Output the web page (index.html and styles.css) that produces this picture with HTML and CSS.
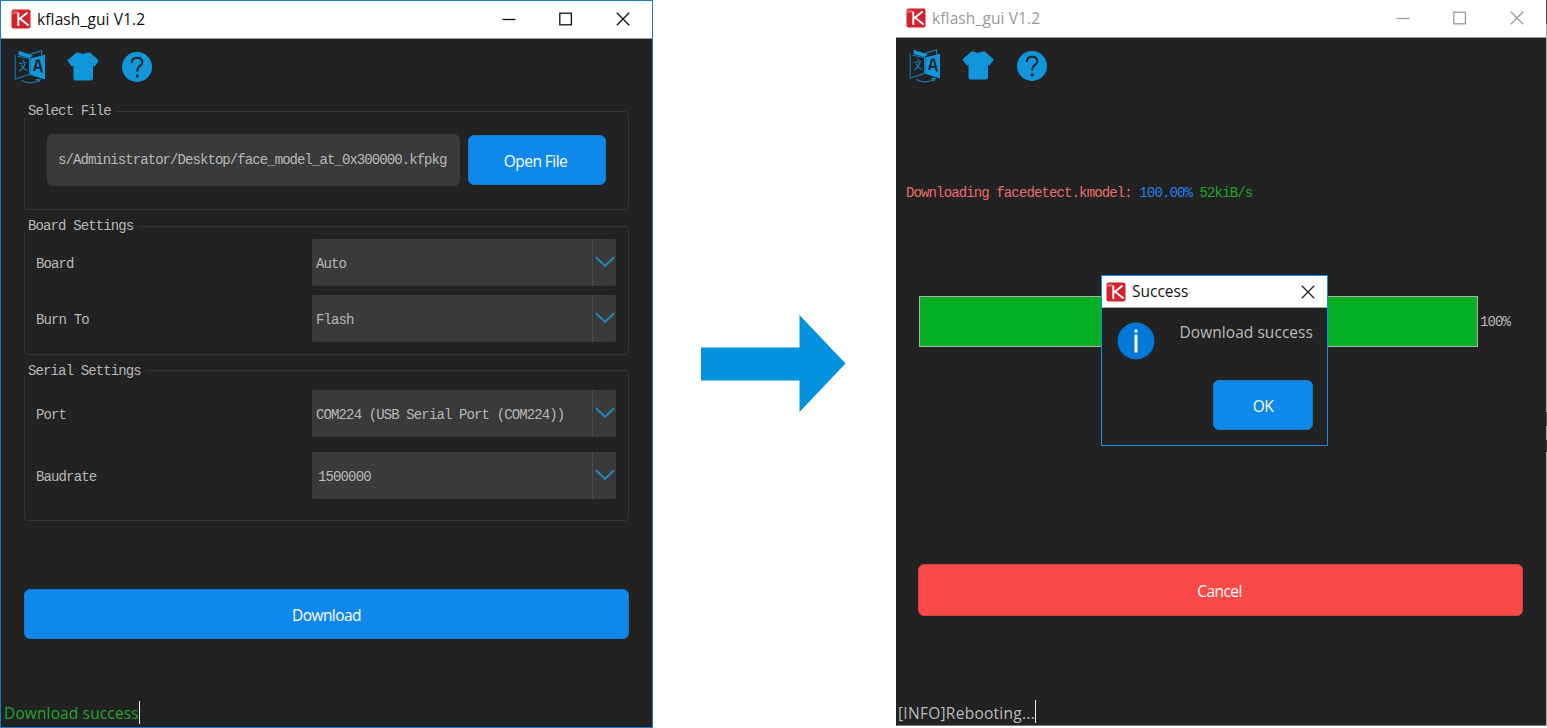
FILE: index.html
```html
<!DOCTYPE html>
<html lang="en">
<head>
<meta charset="utf-8">
<title>kflash_gui V1.2</title>
<link rel="stylesheet" href="styles.css">
</head>
<body>
<svg class="defs" aria-hidden="true">
  <symbol id="logo" viewBox="0 0 20 20">
    <rect x=".5" y=".5" width="19" height="19" rx="2" fill="#d3222c"/>
    <path d="M7.3 3.6V17M7.5 10.8L16.6 3.4M9 9.6L17.6 16.6" fill="none" stroke="#fff" stroke-width="1.9"/>
    <circle cx="2.6" cy="3.4" r="1.2" fill="none" stroke="#f3b4b7" stroke-width=".6"/>
    <circle cx="5.2" cy="3.4" r=".9" fill="none" stroke="#f3b4b7" stroke-width=".6"/>
  </symbol>
  <symbol id="lang" viewBox="0 0 32 34">
    <path d="M4.5 5V.8L19 5.6 15.6 8z" fill="#1296db"/>
    <path d="M15 4.6L27.6.8V6M1.2 4.8V29L15.5 24.6V8.5L3.5 6.2" fill="none" stroke="#1296db" stroke-width="1.1" opacity=".8"/>
    <path d="M16.2 8.6L31 4.8V29.6L16.2 24.8z" fill="#1296db"/>
    <path d="M20 21L23 10.5H24.8L28 22.5M21 17.8H26.8" fill="none" stroke="#222" stroke-width="2"/>
    <path d="M8.8 9.5L9.8 11.8M5 13.5L12.6 12.5M11 13.5Q9.5 19 5 21M7 14.8Q9 18.5 12.8 20.5" fill="none" stroke="#1296db" stroke-width="1.2" opacity=".8"/>
    <path d="M7.5 30.5Q15.5 35 24.5 30.8M22 29.7H26L24 32.4" fill="none" stroke="#1296db" stroke-width="1.2" opacity=".8"/>
  </symbol>
  <symbol id="shirt" viewBox="0 0 32 30">
    <path d="M9.5 1H11.2Q15.8 3.8 20.5 1H23L31.2 8.5 27.5 14 25.5 13.2V26.5Q25.5 28 24 28H8.5Q7 28 7 26.5V13.2L5 14 .8 8.5z" fill="#1296db" stroke="#1296db" stroke-linejoin="round"/>
  </symbol>
  <symbol id="help" viewBox="0 0 32 32">
    <circle cx="16" cy="16" r="15" fill="#1296db"/>
    <path d="M10.7 12Q11 6.7 16 6.7 21.3 6.7 21.3 11.3 21.3 13.7 18.7 15.2 16.3 16.8 16.3 20.5" fill="none" stroke="#222" stroke-width="2"/>
    <rect x="15" y="23.5" width="2.6" height="2.8" fill="#222"/>
  </symbol>
  <symbol id="min" viewBox="0 0 14 14"><path d="M.5 7.5H13.5" stroke="currentColor" stroke-width="1.3"/></symbol>
  <symbol id="max" viewBox="0 0 14 14"><rect x=".8" y="1.2" width="11.6" height="11.6" fill="none" stroke="currentColor" stroke-width="1.3"/></symbol>
  <symbol id="close" viewBox="0 0 14 14"><path d="M.8.8L13.2 13.2M13.2.8L.8 13.2" stroke="currentColor" stroke-width="1.3"/></symbol>
  <symbol id="chev" viewBox="0 0 20 12"><path d="M1 1.2L10 9.8 19 1.2" fill="none" stroke="#1f86bd" stroke-width="2"/></symbol>
</svg>

<main class="stage">
  <section class="window window-main">
    <header class="titlebar">
      <svg class="logo"><use href="#logo"/></svg>
      <span class="title">kflash_gui V1.2</span>
      <span class="controls"><svg><use href="#min"/></svg><svg><use href="#max"/></svg><svg><use href="#close"/></svg></span>
    </header>
    <nav class="toolbar">
      <svg class="lang"><use href="#lang"/></svg><svg class="shirt"><use href="#shirt"/></svg><svg class="help"><use href="#help"/></svg>
    </nav>
    <fieldset class="group group-file">
      <legend>Select File</legend>
      <div class="file-row">
        <div class="path"><span>s/Administrator/Desktop/face_model_at_0x300000.kfpkg</span></div>
        <button class="btn open">Open File</button>
      </div>
    </fieldset>
    <fieldset class="group group-board">
      <legend>Board Settings</legend>
      <div class="rows">
        <div class="row"><label>Board</label><div class="combo"><span>Auto</span><i><svg><use href="#chev"/></svg></i></div></div>
        <div class="row"><label>Burn To</label><div class="combo"><span>Flash</span><i><svg><use href="#chev"/></svg></i></div></div>
      </div>
    </fieldset>
    <fieldset class="group group-serial">
      <legend>Serial Settings</legend>
      <div class="rows">
        <div class="row"><label>Port</label><div class="combo"><span>COM224 (USB Serial Port (COM224))</span><i><svg><use href="#chev"/></svg></i></div></div>
        <div class="row"><label>Baudrate</label><div class="combo editable"><span>1500000</span><i><svg><use href="#chev"/></svg></i></div></div>
      </div>
    </fieldset>
    <button class="btn download">Download</button>
    <footer class="status ok"><span class="status-text">Download success</span></footer>
  </section>

  <svg class="arrow" viewBox="0 0 146 98"><path d="M1 32.5H99.5V0L145.5 48.5 99.5 97V65.5H1z" fill="#0292de"/></svg>

  <section class="window window-progress">
    <header class="titlebar">
      <svg class="logo"><use href="#logo"/></svg>
      <span class="title">kflash_gui V1.2</span>
      <span class="controls"><svg><use href="#min"/></svg><svg><use href="#max"/></svg><svg><use href="#close"/></svg></span>
    </header>
    <nav class="toolbar">
      <svg class="lang"><use href="#lang"/></svg><svg class="shirt"><use href="#shirt"/></svg><svg class="help"><use href="#help"/></svg>
    </nav>
    <p class="task"><span class="name">Downloading facedetect.kmodel:</span> <span class="percent">100.00%</span> <span class="speed">52kiB/s</span></p>
    <div class="progress"><div class="bar"></div><span>100%</span></div>
    <button class="btn cancel">Cancel</button>
    <footer class="status info"><span class="status-text">[INFO]Rebooting...</span></footer>

    <div class="dialog">
      <header class="dialog-title">
        <svg class="logo"><use href="#logo"/></svg>
        <span class="dialog-name">Success</span>
        <svg class="dialog-close"><use href="#close"/></svg>
      </header>
      <div class="dialog-body">
        <svg class="info-icon" viewBox="0 0 38 38"><circle cx="19" cy="19" r="18.5" fill="#0078d7"/><path d="M19 12.5V30.5M19 7.5V10.5" stroke="#fff" stroke-width="3"/></svg>
        <span class="message">Download success</span>
      </div>
      <button class="btn ok-btn">OK</button>
    </div>
  </section>
  <div class="edge"></div>
</main>
</body>
</html>
```

FILE: styles.css
```css
* { box-sizing: border-box; }
body { margin: 0; background: #fff; font-family: "Open Sans", "Noto Sans", sans-serif; overflow: hidden; }
svg { display: block; flex: none; }
.defs { position: absolute; width: 0; height: 0; }
.stage { display: flex; width: 1547px; height: 728px; }

.window { display: flex; flex-direction: column; flex: none; background: #222; }
.window-main { width: 653px; height: 728px; border: 1px solid #1d79c4; }
.window-progress { position: relative; width: 650px; height: 726px; margin-left: 50px; border-bottom: 1px solid #777; }

.titlebar { display: flex; align-items: center; height: 38px; padding: 0 22px 2px 10px; background: #fff; border-bottom: 1px solid #999; color: #111; flex: none; }
.window-progress .titlebar { padding: 0 22px 2px 10px; color: #999; }
.logo { width: 20px; height: 20px; }
.title { margin-left: 6px; font-size: 15.5px; letter-spacing: .12px; white-space: nowrap; }
.controls { display: flex; gap: 43px; margin-left: auto; }
.controls svg { width: 14px; height: 14px; }

.toolbar { display: flex; align-items: center; height: 36px; margin: 10px 0 0 13px; flex: none; }
.lang { width: 32px; height: 34px; }
.shirt { width: 32px; height: 30px; margin-left: 21px; }
.help { width: 32px; height: 32px; margin-left: 22px; }

.group { width: 605px; margin: 0 0 0 23px; padding: 0; border: 1px solid #373737; border-radius: 4px; flex: none; min-width: 0; }
.group legend { margin-left: -1px; padding: 0 5px 0 4px; height: 14px; line-height: 15px; }
.group, .task, .progress { font-family: "Liberation Mono", monospace; font-size: 14px; letter-spacing: -.875px; color: #b8b8b8; }
.group-file { height: 106px; margin-top: 19px; }
.group-board { height: 136px; margin-top: 9px; }
.group-serial { height: 158px; margin-top: 8px; }
.group-serial legend { line-height: 16px; }
.file-row { display: flex; align-items: center; gap: 8px; padding: 16px 0 0 22px; }
.path { display: flex; align-items: center; width: 413px; height: 52px; padding: 0 14px 0 11px; background: #3a3a3a; border-radius: 6px; }
.path span { height: 20px; line-height: 21px; letter-spacing: -.93px; white-space: nowrap; }
.rows { display: flex; flex-direction: column; gap: 9px; padding: 6px 12px 0 11px; }
.group-serial .rows { gap: 15px; padding-top: 13px; }
.row { display: flex; align-items: center; justify-content: space-between; }
.combo { display: flex; align-items: center; width: 304px; height: 47px; padding-left: 4px; background: #3a3a3a; border-radius: 2px; }
.combo.editable { padding-left: 6px; }
.combo span { padding-top: 2px; white-space: nowrap; }
.row label { padding-top: 2px; }
.combo i { display: flex; align-items: center; justify-content: center; width: 24px; height: 100%; margin-left: auto; border-left: 1px solid #4d4d4d; }
.combo svg { width: 20px; height: 12px; margin-top: -1px; }

.btn { flex: none; padding: 2px 0 0; border: 1px solid #1a78ca; border-radius: 6px; background: #0f88eb; color: #fff; font-family: inherit; font-size: 15.5px; letter-spacing: -.55px; white-space: nowrap; }
.open { width: 138px; height: 50px; padding: 1px 3px 0 0; font-family: "Open Sans", sans-serif; }
.download { width: 605px; height: 50px; margin: 68px 0 0 23px; }
.status { display: flex; align-items: center; height: 23px; margin: 62px 0 0 3px; font-size: 15.5px; letter-spacing: .13px; white-space: nowrap; flex: none; }
.status-text { height: 23px; line-height: 25px; border-right: 1px solid #eee; }
.ok { color: #25a52f; }
.info { color: #bbb; margin: 84px 0 0 2px; letter-spacing: .27px; }
.info .status-text { line-height: 26px; }

.arrow { width: 146px; height: 98px; margin: 315px 0 0 47px; }

.task { height: 18px; line-height: 18px; margin: 100px 0 0 10px; color: #e96d6d; white-space: nowrap; }
.percent { color: #267de8; }
.speed { color: #20a52c; }
.progress { display: flex; align-items: center; gap: 2px; height: 51px; margin: 94px 0 0 23px; }
.bar { width: 559px; height: 51px; background: #06b025; border: 1px solid #a9b3a9; }
.cancel { width: 605px; height: 52px; margin: 217px 0 0 22px; padding-right: 2px; background: #f94948; border-color: #c94442; }

.dialog { position: absolute; left: 205px; top: 275px; width: 227px; height: 171px; display: flex; flex-direction: column; background: #222; border: 1px solid #1489f0; }
.dialog-title { display: flex; align-items: center; height: 32px; padding: 0 12px 0 4px; background: #fff; color: #111; border-bottom: 1px solid #aaa; }
.dialog-name { margin-left: 6px; font-size: 15.5px; line-height: 20px; padding-bottom: 1px; }
.dialog-close { width: 14px; height: 14px; margin-left: auto; color: #222; }
.dialog-body { display: flex; justify-content: space-between; padding: 14px 14px 0 15px; height: 72px; color: #bbb; }
.info-icon { width: 38px; height: 38px; }
.message { font-size: 15.5px; line-height: 20px; letter-spacing: .05px; white-space: nowrap; }
.ok-btn { width: 100px; height: 50px; margin-left: 111px; }
.edge { width: 1px; height: 726px; background: linear-gradient(#444 0 24px, #aaa 24px 412px, #555 412px 426px, #aaa 426px 440px, #333 440px 452px, #aaa 452px); }
```
